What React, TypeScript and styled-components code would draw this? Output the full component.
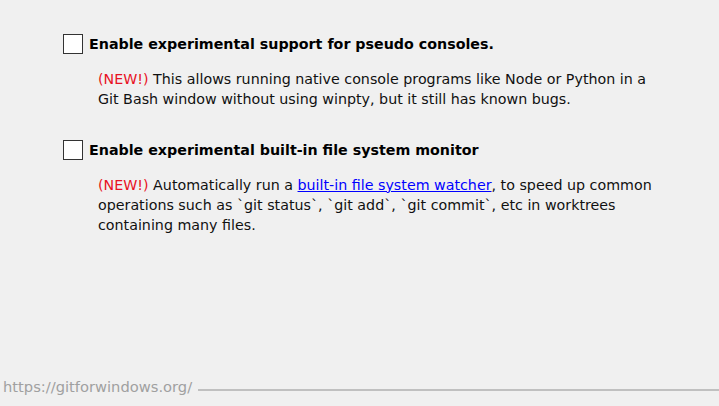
import React from "react";
import styled, { createGlobalStyle } from "styled-components";

const Global = createGlobalStyle`
  html, body { margin: 0; padding: 0; background: #f0f0f0; }
  body { width: 719px; height: 406px; overflow: hidden; }
`;

const Page = styled.div`
  width: 719px;
  height: 406px;
  background: #f0f0f0;
  display: flex;
  flex-direction: column;
  font-family: "DejaVu Sans", sans-serif;
  font-size: 14.25px;
  color: #000;
`;

const Options = styled.div`
  flex: 1;
  display: flex;
  flex-direction: column;
  gap: 30.5px;
  padding: 34px 0 0 63px;
`;

const Option = styled.div`
  display: flex;
  flex-direction: column;
`;

const Header = styled.label`
  display: flex;
  align-items: center;
  gap: 6px;
  font-weight: bold;
  line-height: 20px;
`;

const Box = styled.span`
  width: 18px;
  height: 18px;
  border: 1px solid #333;
  background: #fff;
  box-sizing: content-box;
`;

const Desc = styled.p`
  margin: 15px 0 0 35px;
  line-height: 20px;
  color: #111;
`;

const New = styled.span`
  color: #e81123;
`;

const Link = styled.a`
  color: #0000ff;
  text-decoration: underline;
`;

const Footer = styled.div`
  display: flex;
  align-items: center;
  gap: 6px;
  height: 26px;
  padding: 0 0 7px 3px;
`;

const Url = styled.span`
  color: #a0a0a0;
  font-size: 14.7px;
`;

const Rule = styled.div`
  flex: 1;
  height: 2px;
  margin-top: 8px;
  background: #c0c0c0;
`;

export default function App() {
  return (
    <Page>
      <Global />
      <Options>
        <Option>
          <Header>
            <Box />
            Enable experimental support for pseudo consoles.
          </Header>
          <Desc>
            <New>(NEW!)</New> This allows running native console programs like Node or Python in a
            <br />
            Git Bash window without using winpty, but it still has known bugs.
          </Desc>
        </Option>
        <Option>
          <Header>
            <Box />
            Enable experimental built-in file system monitor
          </Header>
          <Desc>
            <New>(NEW!)</New> Automatically run a <Link href="#">built-in file system watcher</Link>, to speed up common
            <br />
            operations such as `git status`, `git add`, `git commit`, etc in worktrees
            <br />
            containing many files.
          </Desc>
        </Option>
      </Options>
      <Footer>
        <Url>https://gitforwindows.org/</Url>
        <Rule />
      </Footer>
    </Page>
  );
}
